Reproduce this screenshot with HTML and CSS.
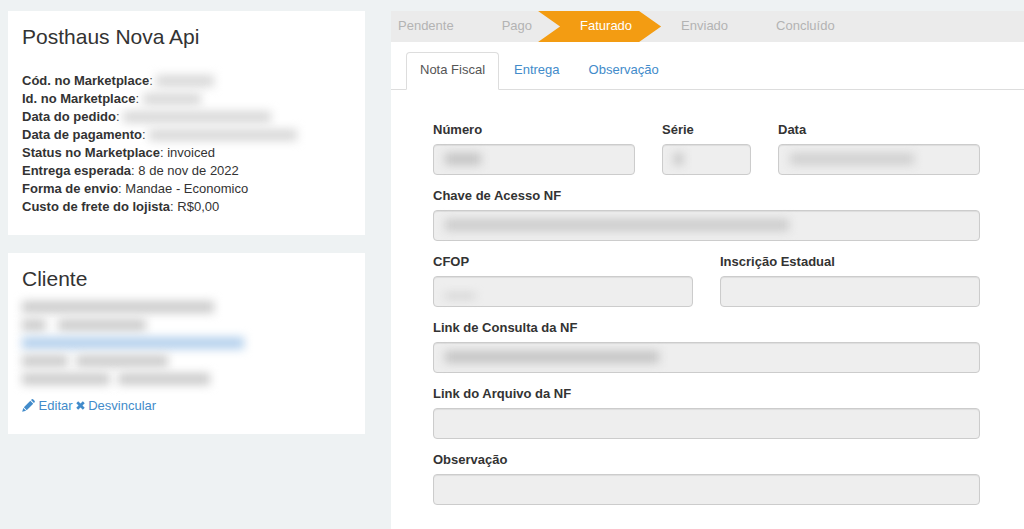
FILE: index.html
```html
<!DOCTYPE html>
<html lang="pt-BR">
  <head>
    <meta charset="UTF-8" />
    <meta name="viewport" content="width=device-width, initial-scale=1.0" />
    <title>Posthaus Nova Api</title>
    <link rel="stylesheet" href="styles.css">
  </head>
  <body>
    <div class="page">
      <aside class="sidebar">
        <section class="card">
          <h2>Posthaus Nova Api</h2>
          <ul class="details order-details">
            <li><b>Cód. no Marketplace</b>: <span class="smear smear-sm"></span></li>
            <li><b>Id. no Marketplace</b>: <span class="smear smear-sm"></span></li>
            <li><b>Data do pedido</b>: <span class="smear smear-lg"></span></li>
            <li><b>Data de pagamento</b>: <span class="smear smear-lg"></span></li>
            <li><b>Status no Marketplace</b>: invoiced</li>
            <li><b>Entrega esperada</b>: 8 de nov de 2022</li>
            <li><b>Forma de envio</b>: Mandae - Economico</li>
            <li><b>Custo de frete do lojista</b>: R$0,00</li>
          </ul>
        </section>

        <section class="card">
          <h2>Cliente</h2>
          <ul class="details client-details">
            <li><span class="smear client-name"></span></li>
            <li><span class="smear client-label-sm"></span> <span class="smear client-doc"></span></li>
            <li><span class="smear client-email"></span></li>
            <li><span class="smear client-label"></span> <span class="smear client-phone"></span></li>
            <li><span class="smear client-label-lg"></span> <span class="smear client-phone"></span></li>
          </ul>
          <div class="actions">
            <a href="#">
              <svg class="icon icon-pencil" viewBox="0 0 14 14" aria-hidden="true">
                <path d="M0.200 13.800L1.400 9.600L4.400 12.600ZM2 8.900L9 1.900L12.100 5L5.100 12ZM9.700 1.200L10.600 0.400Q11.400 -0.200 12.200 0.500L13.500 1.800Q14.200 2.600 13.600 3.400L12.800 4.300Z" />
              </svg>
              Editar</a>
            <a href="#">
              <svg class="icon icon-remove" viewBox="0 0 10 10" aria-hidden="true">
                <path d="M2.400 0.300L5 2.800L7.600 0.300L9.700 2.400L7.200 5L9.700 7.600L7.600 9.700L5 7.200L2.400 9.700L0.300 7.600L2.800 5L0.300 2.400Z" />
              </svg>
              Desvincular</a>
          </div>
        </section>
      </aside>

      <main class="content">
        <ol class="steps">
          <li>Pendente</li>
          <li>Pago</li>
          <li class="active">Faturado</li>
          <li>Enviado</li>
          <li>Concluído</li>
        </ol>

        <nav class="tabs">
          <a href="#" class="active">Nota Fiscal</a>
          <a href="#">Entrega</a>
          <a href="#">Observação</a>
        </nav>

        <form class="invoice">
          <div class="row row-number">
            <div class="field">
              <label for="numero">Número</label>
              <div class="control">
                <input type="text" id="numero" disabled />
                <span class="smear value-number"></span>
              </div>
            </div>
            <div class="field">
              <label for="serie">Série</label>
              <div class="control">
                <input type="text" id="serie" disabled />
                <span class="smear value-serie"></span>
              </div>
            </div>
            <div class="field">
              <label for="data">Data</label>
              <div class="control">
                <input type="text" id="data" disabled />
                <span class="smear value-date"></span>
              </div>
            </div>
          </div>

          <div class="field">
            <label for="chave">Chave de Acesso NF</label>
            <div class="control">
              <input type="text" id="chave" disabled />
              <span class="smear value-key"></span>
            </div>
          </div>

          <div class="row row-half">
            <div class="field">
              <label for="cfop">CFOP</label>
              <div class="control">
                <input type="text" id="cfop" disabled />
                <span class="smear value-cfop"></span>
              </div>
            </div>
            <div class="field">
              <label for="inscricao">Inscrição Estadual</label>
              <input type="text" id="inscricao" disabled />
            </div>
          </div>

          <div class="field">
            <label for="link-consulta">Link de Consulta da NF</label>
            <div class="control">
              <input type="text" id="link-consulta" disabled />
              <span class="smear value-link"></span>
            </div>
          </div>

          <div class="field">
            <label for="link-arquivo">Link do Arquivo da NF</label>
            <input type="text" id="link-arquivo" disabled />
          </div>

          <div class="field">
            <label for="observacao">Observação</label>
            <input type="text" id="observacao" disabled />
          </div>
        </form>
      </main>
    </div>
  </body>
</html>
```

FILE: styles.css
```css
* {
  box-sizing: border-box;
}

body {
  margin: 0;
  background: #eef2f3;
  color: #333;
  font-family: "Liberation Sans", Arial, sans-serif;
  font-size: 13px;
  line-height: 18px;
}

a {
  color: #428bca;
  text-decoration: none;
}

ul,
ol {
  list-style: none;
  margin: 0;
  padding: 0;
}

.page {
  display: grid;
  grid-template-columns: 357fr 633fr;
  gap: 26px;
  min-height: 100vh;
  padding: 11px 0 0 8px;
}

/* Left column */
.sidebar {
  display: flex;
  flex-direction: column;
  gap: 18px;
}

.card {
  background: #fff;
  padding: 14px 14px 19px;
}

.card h2 {
  margin: 0;
  font-size: 21px;
  font-weight: normal;
  line-height: 24px;
}

.order-details {
  margin-top: 23px;
}

.client-details {
  margin-top: 7px;
}

.actions {
  display: flex;
  gap: 3px;
  margin-top: 9px;
}

.icon {
  fill: currentColor;
}

.icon-pencil {
  width: 13px;
  height: 13px;
  vertical-align: -2px;
}

.icon-remove {
  width: 9px;
  height: 9px;
  vertical-align: 0;
}

/* Hidden customer data */
.smear {
  display: inline-block;
  height: 12px;
  background: #ccc;
  filter: blur(5px);
  vertical-align: -2px;
}

.order-details .smear {
  background: #d9d9d9;
}

.smear-sm {
  width: 58px;
}

.smear-lg {
  width: 148px;
}

.client-name {
  width: 192px;
}

.client-label-sm {
  width: 24px;
}

.client-doc {
  width: 88px;
  margin-left: 8px;
}

.client-email {
  width: 222px;
  background: #b4d0ec;
}

.client-label {
  width: 46px;
}

.client-label-lg {
  width: 88px;
}

.client-phone {
  width: 92px;
  margin-left: 4px;
}

/* Order status */
.content {
  background: #fff;
  min-width: 0;
}

.steps {
  display: flex;
  height: 31px;
  padding-left: 7px;
  background: #ebebeb;
  color: #b3b3b3;
  line-height: 30px;
}

.steps li {
  margin-right: 48px;
}

.steps .active {
  margin: 0 20px 0 -42px;
  padding: 0 29px 0 42px;
  background: #f39c12;
  color: #fff;
  clip-path: polygon(0 0, calc(100% - 22px) 0, 100% 50%, calc(100% - 22px) 100%, 0 100%, 22px 50%);
}

/* Tabs */
.tabs {
  display: flex;
  gap: 1px;
  margin-top: 10px;
  padding-left: 15px;
  border-bottom: 1px solid #ddd;
}

.tabs a {
  margin-bottom: -1px;
  padding: 8px 13px 10px;
  border: 1px solid transparent;
  border-radius: 4px 4px 0 0;
}

.tabs .active {
  background: #fff;
  border-color: #ddd;
  border-bottom-color: #fff;
  color: #555;
}

/* Invoice form */
.invoice {
  padding: 31px 44px 12px 42px;
}

.row {
  display: grid;
  column-gap: 27px;
}

.row-number {
  grid-template-columns: 202fr 89fr 202fr;
}

.row-half {
  grid-template-columns: 1fr 1fr;
}

.field {
  margin-bottom: 12px;
}

.field label {
  display: block;
  margin-bottom: 5px;
  font-weight: bold;
}

.field input {
  display: block;
  width: 100%;
  height: 31px;
  padding: 5px 11px;
  border: 1px solid #ccc;
  border-radius: 4px;
  background: #eee;
  box-shadow: inset 0 1px 1px rgba(0, 0, 0, 0.075);
  color: #555;
  font: inherit;
}

.control {
  position: relative;
}

.control .smear {
  position: absolute;
  top: 9px;
  left: 12px;
  max-width: calc(100% - 24px);
  background: #c4c4c4;
}

.value-number {
  width: 36px;
}

.control .value-serie {
  width: 9px;
}

.control .value-date {
  width: 124px;
  background: #d0d0d0;
}

.control .value-key {
  width: 344px;
  background: #ccc;
}

.control .value-cfop {
  top: 18px;
  width: 30px;
  height: 4px;
}

.value-link {
  width: 214px;
}
```
